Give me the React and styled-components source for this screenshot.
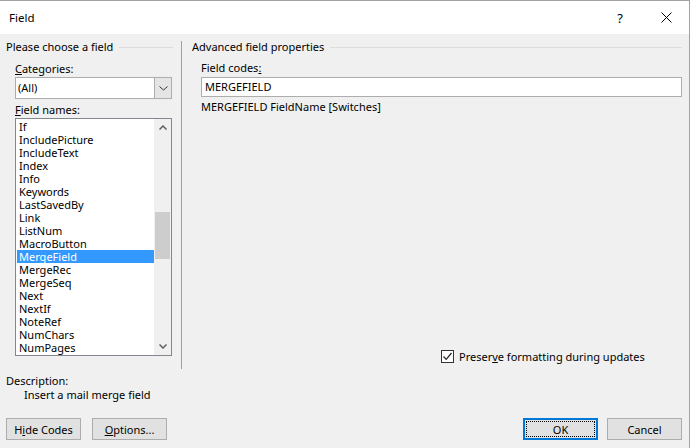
import React from 'react';
import styled, { createGlobalStyle } from 'styled-components';

const Global = createGlobalStyle`
  html, body { margin: 0; padding: 0; background: #f0f0f0; }
  body {
    font-family: "Segoe UI", "Noto Sans", "Open Sans", sans-serif;
    font-size: 11px;
    color: #000;
  }
  * { box-sizing: border-box; }
`;

const Window = styled.div`
  width: 690px;
  height: 448px;
  border-top: 1px solid #a3a3a3;
  border-right: 1px solid #a3a3a3;
  background: #f0f0f0;
  display: flex;
  flex-direction: column;
  overflow: hidden;
`;

const TitleBar = styled.div`
  height: 33px;
  flex: none;
  background: #fff;
  display: flex;
  align-items: center;
  padding-left: 9px;
`;

const Title = styled.div`
  font-size: 11.5px;
  flex: 1;
`;

const TitleButton = styled.div`
  width: 46px;
  height: 33px;
  display: flex;
  align-items: center;
  justify-content: center;
  font-size: 13px;
`;

const Body = styled.div`
  flex: 1;
  display: flex;
  flex-direction: column;
  padding: 6px 7px 8px 6px;
`;

const Main = styled.div`
  height: 329px;
  display: flex;
`;

const LeftPane = styled.div`
  width: 167px;
  display: flex;
  flex-direction: column;
`;

const RightPane = styled.div`
  flex: 1;
  padding-left: 10px;
  display: flex;
  flex-direction: column;
`;

const Divider = styled.div`
  width: 1px;
  margin-left: 8px;
  margin-top: 1px;
  background: #a0a0a0;
`;

const GroupHeader = styled.div`
  display: flex;
  align-items: center;
  gap: 6px;
  height: 14px;
  line-height: 14px;
  white-space: nowrap;
  &::after {
    content: "";
    flex: 1;
    height: 1px;
    background: #dcdcdc;
  }
`;

const Indent = styled.div`
  padding-left: ${p => p.$left || 9}px;
  display: flex;
  flex-direction: column;
  flex: ${p => (p.$grow ? 1 : 'none')};
`;

const Label = styled.div`
  line-height: 14px;
  height: 14px;
  margin-top: ${p => p.$mt || 0}px;
  white-space: nowrap;
`;

const Combo = styled.div`
  margin-top: 1px;
  height: 22px;
  width: 157px;
  border: 1px solid #adadad;
  background: #fff;
  display: flex;
`;

const ComboText = styled.div`
  flex: 1;
  padding-left: 2px;
  line-height: 20px;
`;

const ComboButton = styled.div`
  width: 17px;
  background: #e5e5e5;
  border-left: 1px solid #adadad;
  display: flex;
  align-items: center;
  justify-content: center;
`;

const ListBox = styled.div`
  margin-top: 1px;
  width: 157px;
  height: 238px;
  border: 1px solid #828790;
  background: #fff;
  display: flex;
`;

const ListItems = styled.div`
  flex: 1;
  padding: 1px 0 0 1px;
  display: flex;
  flex-direction: column;
`;

const ListItem = styled.div`
  height: 13px;
  line-height: 13px;
  padding-left: 2px;
  white-space: nowrap;
  background: ${p => (p.$selected ? '#3399ff' : 'transparent')};
  color: ${p => (p.$selected ? '#fff' : '#000')};
`;

const ScrollBar = styled.div`
  width: 17px;
  background: #f0f0f0;
  display: flex;
  flex-direction: column;
`;

const ScrollArrow = styled.div`
  height: 17px;
  display: flex;
  align-items: center;
  justify-content: center;
`;

const ScrollTrack = styled.div`
  flex: 1;
  display: flex;
  flex-direction: column;
`;

const ScrollThumb = styled.div`
  margin-left: 1px;
  width: 15px;
  background: #cdcdcd;
`;

const TextInput = styled.div`
  margin-top: 2px;
  height: 20px;
  border: 1px solid #adadad;
  background: #fff;
  padding-left: 3px;
  line-height: 18px;
`;

const Spacer = styled.div`
  flex: 1;
`;

const CheckRow = styled.label`
  display: flex;
  align-items: center;
  gap: 5px;
  height: 14px;
  margin-bottom: 6px;
  padding-left: 240px;
  white-space: nowrap;
`;

const CheckBox = styled.div`
  width: 13px;
  height: 13px;
  border: 1px solid #333;
  background: #fff;
  display: flex;
  align-items: center;
  justify-content: center;
`;

const Description = styled.div`
  margin-top: 5px;
  display: flex;
  flex-direction: column;
`;

const ButtonRow = styled.div`
  margin-top: 16px;
  height: 22px;
  display: flex;
`;

const Button = styled.div`
  position: relative;
  width: 75px;
  height: 22px;
  margin-left: ${p => p.$ml || 0}px;
  background: #e1e1e1;
  border: ${p => (p.$default ? '2px solid #0078d7' : '1px solid #adadad')};
  display: flex;
  align-items: center;
  justify-content: center;
  white-space: nowrap;
  ${p =>
    p.$default &&
    `&::after {
      content: "";
      position: absolute;
      inset: 1px;
      border: 1px dotted #000;
    }`}
`;

const Push = styled.div`
  margin-left: auto;
  display: flex;
`;

const items = [
  'If', 'IncludePicture', 'IncludeText', 'Index', 'Info', 'Keywords', 'LastSavedBy',
  'Link', 'ListNum', 'MacroButton', 'MergeField', 'MergeRec', 'MergeSeq', 'Next',
  'NextIf', 'NoteRef', 'NumChars', 'NumPages',
];

const Chevron = ({ up, color = '#606060', w = 8, h = 5, sw = 1.5 }) => (
  <svg width={w} height={h} viewBox={`0 0 ${w} ${h}`}>
    <polyline
      points={up ? `0.5,${h - 0.5} ${w / 2},1 ${w - 0.5},${h - 0.5}` : `0.5,0.5 ${w / 2},${h - 1} ${w - 0.5},0.5`}
      fill="none"
      stroke={color}
      strokeWidth={sw}
    />
  </svg>
);

export default function App() {
  return (
    <>
      <Global />
      <Window>
        <TitleBar>
          <Title>Field</Title>
          <TitleButton>?</TitleButton>
          <TitleButton>
            <svg width="11" height="11" viewBox="0 0 11 11">
              <path d="M0.5 0.5 L10.5 10.5 M10.5 0.5 L0.5 10.5" stroke="#000" strokeWidth="1" fill="none" />
            </svg>
          </TitleButton>
        </TitleBar>
        <Body>
          <Main>
            <LeftPane>
              <GroupHeader>Please choose a field</GroupHeader>
              <Indent>
                <Label $mt={8}><u>C</u>ategories:</Label>
                <Combo>
                  <ComboText>(All)</ComboText>
                  <ComboButton>
                    <Chevron w={9} h={5} sw={1} color="#333" />
                  </ComboButton>
                </Combo>
                <Label $mt={4}><u>F</u>ield names:</Label>
                <ListBox>
                  <ListItems>
                    {items.map(it => (
                      <ListItem key={it} $selected={it === 'MergeField'}>{it}</ListItem>
                    ))}
                  </ListItems>
                  <ScrollBar>
                    <ScrollArrow><Chevron up /></ScrollArrow>
                    <ScrollTrack>
                      <ScrollThumb style={{ marginTop: 76, height: 47 }} />
                    </ScrollTrack>
                    <ScrollArrow><Chevron /></ScrollArrow>
                  </ScrollBar>
                </ListBox>
              </Indent>
            </LeftPane>
            <Divider />
            <RightPane>
              <GroupHeader>Advanced field properties</GroupHeader>
              <Indent $grow>
                <Label $mt={7}>Field codes<u>:</u></Label>
                <TextInput>MERGEFIELD</TextInput>
                <Label $mt={3}>MERGEFIELD FieldName [Switches]</Label>
                <Spacer />
                <CheckRow>
                  <CheckBox>
                    <svg width="11" height="11" viewBox="0 0 11 11">
                      <polyline points="1.5,5.5 4.2,8.3 9.5,2" fill="none" stroke="#222" strokeWidth="1.2" />
                    </svg>
                  </CheckBox>
                  <span>Preser<u>v</u>e formatting during updates</span>
                </CheckRow>
              </Indent>
            </RightPane>
          </Main>
          <Description>
            <Label>Description:</Label>
            <Indent $left={18}>
              <Label>Insert a mail merge field</Label>
            </Indent>
          </Description>
          <ButtonRow>
            <Button>H<u>i</u>de Codes</Button>
            <Button $ml={11}><u>O</u>ptions...</Button>
            <Push>
              <Button $default>OK</Button>
              <Button $ml={9}>Cancel</Button>
            </Push>
          </ButtonRow>
        </Body>
      </Window>
    </>
  );
}
